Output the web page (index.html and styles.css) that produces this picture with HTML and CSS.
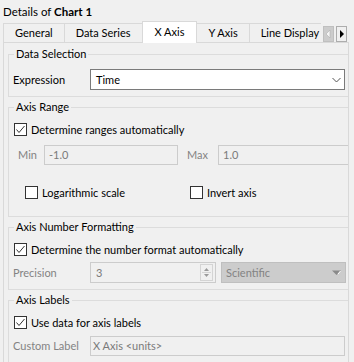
FILE: index.html
```html
<!DOCTYPE html>
<html lang="en">
<head>
  <meta charset="UTF-8">
  <title>Details of Chart 1</title>
  <link rel="stylesheet" href="styles.css">
</head>
<body>
  <div class="window">
    <div class="title">Details of <b>Chart 1</b></div>

    <!-- Tab strip -->
    <div class="tabbar">
      <div class="tab">General</div>
      <div class="tab">Data Series</div>
      <div class="tab active">X Axis</div>
      <div class="tab">Y Axis</div>
      <div class="tab">Line Display</div>
      <div class="tab-scroll">
        <span class="scroll-btn disabled">
          <svg width="9" height="14" viewBox="0 0 9 14"><polygon points="6,3 6,11 2,7" fill="#f4f4f4" stroke="#b0b0b0" stroke-width="0.6"/></svg>
        </span>
        <span class="scroll-btn">
          <svg width="9" height="14" viewBox="0 0 9 14"><polygon points="3,3 3,11 7,7" fill="#000"/></svg>
        </span>
      </div>
    </div>

    <div class="pane">
      <div class="pane-inner">

        <fieldset class="group">
          <legend>Data Selection</legend>
          <div class="row first">
            <span class="field-label">Expression</span>
            <div class="combo wide">
              <span>Time</span>
              <svg width="9" height="6" viewBox="0 0 9 6"><polyline points="0.5,1 4.5,5 8.5,1" fill="none" stroke="#555" stroke-width="1"/></svg>
            </div>
          </div>
        </fieldset>

        <fieldset class="group">
          <legend>Axis Range</legend>
          <div class="row">
            <span class="checkbox checked"><svg width="11" height="11" viewBox="0 0 11 11"><polyline points="1.5,5.5 4,8.5 9.5,2" fill="none" stroke="#333" stroke-width="1"/></svg></span>
            <span>Determine ranges automatically</span>
          </div>
          <div class="row range-row">
            <span class="range-label">Min</span>
            <div class="input disabled range-input">-1.0</div>
            <span class="range-label max">Max</span>
            <div class="input disabled range-input">1.0</div>
          </div>
          <div class="row option-row">
            <div class="option">
              <span class="checkbox"></span>
              <span>Logarithmic scale</span>
            </div>
            <div class="option">
              <span class="checkbox"></span>
              <span>Invert axis</span>
            </div>
          </div>
        </fieldset>

        <fieldset class="group">
          <legend>Axis Number Formatting</legend>
          <div class="row">
            <span class="checkbox checked"><svg width="11" height="11" viewBox="0 0 11 11"><polyline points="1.5,5.5 4,8.5 9.5,2" fill="none" stroke="#333" stroke-width="1"/></svg></span>
            <span>Determine the number format automatically</span>
          </div>
          <div class="row tight">
            <span class="field-label disabled">Precision</span>
            <div class="input disabled spin">
              <span>3</span>
              <span class="spin-arrows">
                <svg width="11" height="15" viewBox="0 0 11 15">
                  <polygon points="5.5,3 8,6 3,6" fill="#9a9a9a"/>
                  <line x1="1" y1="7.5" x2="10" y2="7.5" stroke="#d4d4d4"/>
                  <polygon points="3,9 8,9 5.5,12" fill="#9a9a9a"/>
                </svg>
              </span>
            </div>
            <div class="combo disabled format-combo">
              <span>Scientific</span>
              <svg width="9" height="6" viewBox="0 0 9 6"><polygon points="0,0.5 9,0.5 4.5,5" fill="#8a8a8a"/><line x1="6" y1="4" x2="8.5" y2="1" stroke="#fff"/></svg>
            </div>
          </div>
        </fieldset>

        <fieldset class="group">
          <legend>Axis Labels</legend>
          <div class="row">
            <span class="checkbox checked"><svg width="11" height="11" viewBox="0 0 11 11"><polyline points="1.5,5.5 4,8.5 9.5,2" fill="none" stroke="#333" stroke-width="1"/></svg></span>
            <span>Use data for axis labels</span>
          </div>
          <div class="row tight">
            <span class="field-label disabled">Custom Label</span>
            <div class="input disabled wide label-input">X Axis &lt;units&gt;</div>
          </div>
        </fieldset>

      </div>
    </div>
  </div>
</body>
</html>
```

FILE: styles.css
```css
/* Qt-ish dialog, Windows style */
:root {
  --bg: #f0f0f0;
  --line: #d9d9d9;
  --group-line: #dcdcdc;
  --muted: #838383;
}

* {
  box-sizing: border-box;
}

html, body {
  margin: 0;
  padding: 0;
}

body {
  width: 354px;
  height: 362px;
  overflow: hidden;
  background: var(--bg);
  color: #000;
  font-family: Lato, "Liberation Sans", sans-serif;
  font-size: 11px;
  line-height: 15px;
}

.title {
  height: 21px;
  padding: 4px 3px 2px;
  font-size: 11.5px;
}

.title b {
  font-weight: 700;
}

/* Tabs */
.tabbar {
  position: relative;
  display: flex;
  align-items: flex-end;
  height: 21px;
  padding-left: 3px;
}

.tab {
  height: 19px;
  padding: 0 11px;
  margin-left: -1px;
  border: 1px solid var(--line);
  border-bottom: none;
  background: var(--bg);
  line-height: 17px;
  white-space: nowrap;
}

.tab:first-child {
  margin-left: 0;
}

.tab.active {
  position: relative;
  z-index: 2;
  height: 22px;
  margin-bottom: -1px;
  padding: 0 12px 3px;
  background: #fff;
  line-height: 19px;
}

.tab-scroll {
  position: absolute;
  z-index: 3;
  top: 0;
  left: 321px;
  width: 26px;
  height: 21px;
  display: flex;
  gap: 2px;
  padding: 5px 0 0 2px;
  background: var(--bg);
}

.scroll-btn {
  display: flex;
  align-items: center;
  justify-content: center;
  width: 11px;
  height: 16px;
  border: 1px solid #adadad;
  background: #f0f0f0;
}

.scroll-btn.disabled {
  border-color: #bfbfbf;
  background: #cccccc;
}

/* Pane */
.pane {
  position: relative;
  z-index: 1;
  width: 346px;
  height: 320px;
  margin-left: 3px;
  padding: 4px 0 0 4px;
  border: 1px solid var(--line);
  border-bottom: none;
  overflow: hidden;
}

.pane-inner {
  width: 360px;
}

.group {
  margin: 0;
  padding: 5px 4px 6px;
  border: 1px solid var(--group-line);
  min-width: 0;
  width: 352px;
}

.group + .group {
  margin-top: 3px;
}

.group legend {
  margin-left: 1px;
  padding: 0 2px;
  line-height: 14px;
}

.row {
  display: flex;
  align-items: center;
  height: 21px;
  white-space: nowrap;
}

.row.first {
  margin-top: 3px;
}

.row.tight {
  margin-top: 2px;
}

.field-label {
  width: 77px;
  flex: none;
}

.disabled,
.field-label.disabled,
.range-label {
  color: var(--muted);
}

/* Check boxes */
.checkbox {
  display: inline-flex;
  align-items: center;
  justify-content: center;
  flex: none;
  width: 13px;
  height: 13px;
  margin: 0 4px 0 1px;
  border: 1px solid #333;
  background: #fff;
}

/* Inputs */
.input,
.combo {
  display: flex;
  align-items: center;
  height: 21px;
  border: 1px solid #cccccc;
  background: var(--bg);
  flex: none;
}

.input {
  padding-left: 4px;
  color: #7a7a7a;
}

.combo {
  justify-content: space-between;
  padding: 0 3px 0 5px;
  border-color: #7a7a7a;
  background: #fff;
}

.wide {
  width: 255px;
}

.range-row {
  margin-top: 4px;
  padding-left: 5px;
}

.range-label {
  width: 26px;
}

.range-label.max {
  width: 31px;
  margin-left: 9px;
}

.range-input {
  width: 134px;
  height: 20px;
}

.option-row {
  margin-top: 17px;
  margin-bottom: 7px;
  padding-left: 12px;
}

.option {
  display: flex;
  align-items: center;
  width: 173px;
}

.option .checkbox {
  margin-left: 0;
}

.spin {
  width: 126px;
  padding-left: 5px;
  justify-content: space-between;
}

.spin-arrows {
  display: flex;
  width: 13px;
  height: 17px;
  margin-right: 2px;
  align-items: center;
  justify-content: center;
  border: 1px solid #d4d4d4;
}

.format-combo {
  width: 125px;
  margin-left: 5px;
  padding-left: 4px;
  padding-right: 4px;
  border-color: #bfbfbf;
  background: #cccccc;
  color: var(--muted);
}

.label-input {
  height: 20px;
  padding-left: 2px;
}
```
